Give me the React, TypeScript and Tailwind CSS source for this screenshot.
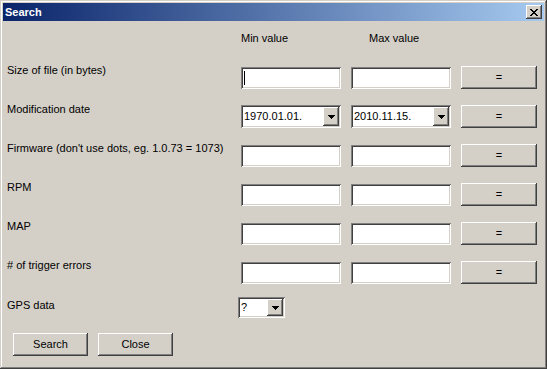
import React from 'react';

const raised =
  'shadow-[inset_-1px_-1px_#404040,inset_1px_1px_#ffffff,inset_-2px_-2px_#808080,inset_2px_2px_#d4d0c8]';
const sunken =
  'shadow-[inset_1px_1px_#808080,inset_-1px_-1px_#ffffff,inset_2px_2px_#404040,inset_-2px_-2px_#d4d0c8]';

function Field({ cursor }: { cursor?: boolean }) {
  return (
    <div className={`relative h-[22px] w-[100px] bg-white ${sunken}`}>
      {cursor && <div className="absolute left-[3px] top-[4px] h-[14px] w-px bg-black" />}
    </div>
  );
}

function Arrow() {
  return (
    <svg width="7" height="4" viewBox="0 0 7 4" shapeRendering="crispEdges">
      <path d="M0 0h7v1H0zM1 1h5v1H1zM2 2h3v1H2zM3 3h1v1H3z" fill="#000" />
    </svg>
  );
}

function Combo({ value, width, height }: { value: string; width: string; height: string }) {
  return (
    <div className={`flex ${width} ${height} items-stretch bg-white p-[2px] ${sunken}`}>
      <div className="flex flex-1 items-center pl-[1px] text-[11px] text-black">{value}</div>
      <div className={`flex w-[16px] items-center justify-center bg-[#d4d0c8] ${raised}`}>
        <Arrow />
      </div>
    </div>
  );
}

function Button({ label, width = 'w-[75px]' }: { label: string; width?: string }) {
  return (
    <div className={`flex h-[23px] ${width} items-center justify-center bg-[#d4d0c8] text-[11px] text-black ${raised}`}>
      {label}
    </div>
  );
}

export default function App() {
  const rows: { label: string; combo?: [string, string]; cursor?: boolean }[] = [
    { label: 'Size of file (in bytes)', cursor: true },
    { label: 'Modification date', combo: ['1970.01.01.', '2010.11.15.'] },
    { label: "Firmware (don't use dots, eg. 1.0.73 = 1073)" },
    { label: 'RPM' },
    { label: 'MAP' },
    { label: '# of trigger errors' },
  ];

  return (
    <div
      className="flex h-[369px] w-[547px] flex-col bg-[#d4d0c8] p-[3px] text-black shadow-[inset_-1px_-1px_#404040,inset_1px_1px_#d4d0c8,inset_-2px_-2px_#808080,inset_2px_2px_#ffffff]"
      style={{ fontFamily: '"Liberation Sans", Arial, sans-serif' }}
    >
      <div className="flex h-[18px] items-center justify-between bg-[linear-gradient(to_right,#0a246a,#a6caf0)] pl-[2px] pr-[2px]">
        <span className="text-[11px] font-bold text-white">Search</span>
        <div className={`flex h-[14px] w-[16px] items-center justify-center bg-[#d4d0c8] ${raised}`}>
          <svg width="8" height="7" viewBox="0 0 8 7" shapeRendering="crispEdges">
            <path
              d="M0 0h2v1H0zM6 0h2v1H6zM1 1h2v1H1zM5 1h2v1H5zM2 2h4v1H2zM3 3h2v1H3zM2 4h4v1H2zM1 5h2v1H1zM5 5h2v1H5zM0 6h2v1H0zM6 6h2v1H6z"
              fill="#000"
            />
          </svg>
        </div>
      </div>

      <div className="flex flex-col pl-[4px]">
        <div className="mt-[11px] flex h-[13px] items-center text-[11px] leading-[13px]">
          <div className="w-[234px]" />
          <div className="w-[128px]">Min value</div>
          <div>Max value</div>
        </div>

        <div className="mt-[21px] flex flex-col gap-[16px]">
          {rows.map((r) => (
            <div key={r.label} className="flex h-[23px] items-start">
              <div className="-mt-[2px] w-[234px] text-[11px] leading-[13px]">{r.label}</div>
              {r.combo ? (
                <>
                  <Combo value={r.combo[0]} width="w-[100px]" height="h-[23px]" />
                  <div className="w-[10px]" />
                  <Combo value={r.combo[1]} width="w-[100px]" height="h-[23px]" />
                </>
              ) : (
                <div className="mt-px flex gap-[10px]">
                  <Field cursor={r.cursor} />
                  <Field />
                </div>
              )}
              <div className="w-[10px]" />
              <Button label="=" width="w-[76px]" />
            </div>
          ))}
        </div>

        <div className="mt-[13px] flex h-[21px] items-start">
          <div className="mt-[2px] w-[231px] text-[11px] leading-[13px]">GPS data</div>
          <Combo value="?" width="w-[47px]" height="h-[21px]" />
        </div>

        <div className="mt-[15px] flex gap-[10px] pl-[6px]">
          <Button label="Search" />
          <Button label="Close" />
        </div>
      </div>
    </div>
  );
}
